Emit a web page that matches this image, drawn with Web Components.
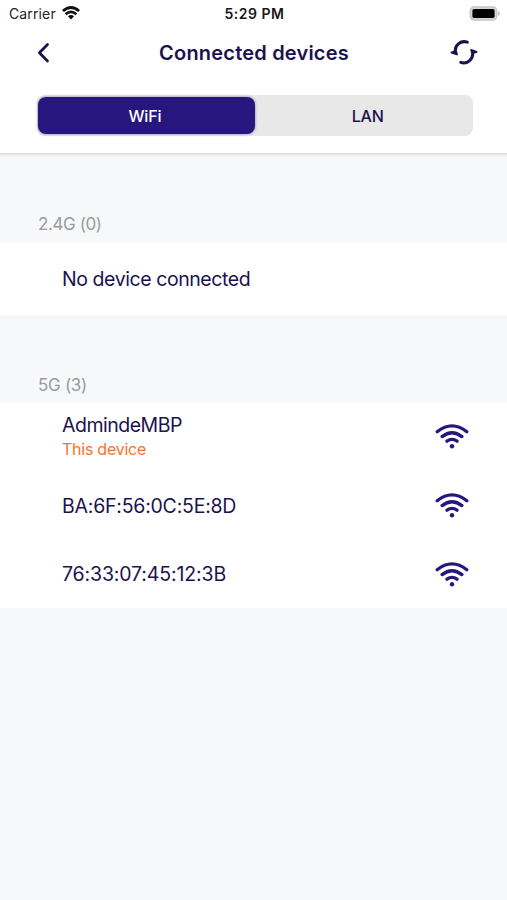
<!DOCTYPE html>
<html lang="en">
<head>
<meta charset="utf-8">
<title>Connected devices</title>
<style>
html,body{margin:0;height:100%;background:#f6f8fa}
body{font-family:Inter,"Liberation Sans",sans-serif;color:#1c1250;overflow:hidden}
</style>
</head>
<body>
<app-screen></app-screen>
<script>
const define = (name, html) => {
  const t = document.createElement('template');
  t.innerHTML = html;
  customElements.define(name, class extends HTMLElement {
    constructor() {
      super();
      this.attachShadow({mode: 'open'}).appendChild(t.content.cloneNode(true));
    }
  });
};

define('wifi-icon', `
<style>:host{display:block;width:34px;height:26px}svg{display:block;width:100%;height:100%}</style>
<svg viewBox="0 0 34 26" fill="none" stroke="#28167f" stroke-width="3.3" stroke-linecap="round">
<path d="M2.2 8.7Q17-3 31.8 8.7M7.1 13.6Q17 5.8 26.9 13.6M12 18.2Q17 14.6 22 18.2"/>
<circle cx="17" cy="23.2" r="2.2" fill="#28167f" stroke="none"/></svg>`);

define('status-bar', `
<style>
:host{display:grid;grid-template-columns:1fr auto 1fr;align-items:center;height:27px;padding:0 7px 0 9px;color:#222}
.left{display:flex;align-items:center;gap:6px;font-size:14px;letter-spacing:.13px}
.time{font-size:14px;font-weight:600;letter-spacing:.5px;color:#181818}
.battery{justify-self:end}
svg{display:block}
</style>
<div class="left"><span>Carrier</span>
<svg width="18" height="15" viewBox="0 0 18 15" fill="none" stroke="#111" stroke-width="2.8">
<path d="M.9 5Q9-2 17.1 5M3.6 8.2Q9 3.6 14.4 8.2"/><path d="M5.9 10.3Q9 7.6 12.1 10.3L9 13.6Z" fill="#111" stroke="none"/></svg></div>
<span class="time">5:29 PM</span>
<svg class="battery" width="31" height="15" viewBox="0 0 31 15">
<rect x="1.3" y=".9" width="26.4" height="13.2" rx="4" fill="#d6d6d6" stroke="#c2c2c2" stroke-width="1.3"/>
<rect x="3.4" y="3.1" width="22.2" height="8.8" rx="1.6" fill="#000"/>
<path d="M29 5.1Q31 6 31 7.5T29 9.9Z" fill="#c2c2c2"/></svg>`);

define('nav-bar', `
<style>
:host{display:grid;grid-template-columns:1fr auto 1fr;align-items:center;height:51px;padding:0 28px 0 36px}
h1{margin:0;font-size:20px;line-height:24px;font-weight:600;letter-spacing:.2px;color:#1c1250;padding-right:7px}
.refresh{justify-self:end}
svg{display:block}
</style>
<svg width="15" height="22" viewBox="0 0 15 22" fill="none" stroke="#1c1250" stroke-width="2.8" stroke-linecap="round" stroke-linejoin="round"><path d="M11.5 2.6 3.4 10.7 11.5 19"/></svg>
<h1><slot></slot></h1>
<svg class="refresh" width="30" height="28" viewBox="0 0 30 28" fill="none" stroke="#1c1250" stroke-width="3" stroke-linecap="round">
<path d="M18.3 3.2C12 1 5.4 6 6.2 13.4M11.8 23.4C18 25.6 24.4 20.4 23.8 13"/>
<path d="M2.6 13.6 7.9 15.4 7 12.6ZM27.5 12.9 22.2 11 23.1 13.8Z" fill="#1c1250" stroke-width="2" stroke-linejoin="round"/></svg>`);

define('segment-tab', `
<style>
:host{display:flex;align-items:center;justify-content:center;box-sizing:border-box;border-radius:8px;font-size:16px;font-weight:500;letter-spacing:-.2px;color:#1c1250;padding-left:9px}
:host([selected]){background:#28167f;color:#fff;box-shadow:0 0 3px #28167f88;padding:0 3px 0 0}
</style><slot></slot>`);

define('segment-control', `
<style>:host{display:grid;grid-template-columns:1fr 1fr;box-sizing:border-box;height:41px;margin:17px 34.5px 0 37px;padding:2px 1px;border-radius:8px;background:#e8e8e8}</style><slot></slot>`);

define('screen-header', `
<style>:host{display:block;box-sizing:border-box;height:153px;background:#fff;box-shadow:0 1px 2px 1px #d9dadc}</style><slot></slot>`);

define('device-section', `
<style>
:host{display:block}
.label{display:flex;align-items:flex-end;box-sizing:border-box;height:87px;padding:0 38px 7px;font-size:17px;line-height:21px;letter-spacing:-.4px;color:#9b9b9e}
.card{background:#fff}
:host(.lower) .label{padding-bottom:6px;letter-spacing:-.3px}
</style><div class="label"><slot name="label"></slot></div><div class="card"><slot></slot></div>`);

define('device-row', `
<style>
:host{display:flex;align-items:center;justify-content:space-between;box-sizing:border-box;height:var(--row-height,68.67px);padding:0 38px 0 62px}
.text{display:flex;flex-direction:column;font-size:19.5px;line-height:24px;letter-spacing:var(--tracking,0);padding-top:var(--nudge,0)}
::slotted([slot=note]){font-size:16px;line-height:20px;margin-top:2px;letter-spacing:-.25px;color:#f6742a}
</style><div class="text"><span><slot></slot></span><slot name="note"></slot></div><slot name="icon"></slot>`);

define('app-screen', `
<style>
:host{display:block;height:900px;background:#f6f8fa}
main{padding-top:2px}
</style>
<screen-header>
<status-bar></status-bar>
<nav-bar>Connected devices</nav-bar>
<segment-control><segment-tab selected>WiFi</segment-tab><segment-tab>LAN</segment-tab></segment-control>
</screen-header>
<main>
<device-section><span slot="label">2.4G (0)</span>
<device-row style="--row-height:73px;--tracking:-.43px">No device connected</device-row></device-section>
<device-section class="lower"><span slot="label">5G (3)</span>
<device-row style="--tracking:-.5px">AdmindeMBP<span slot="note">This device</span><wifi-icon slot="icon"></wifi-icon></device-row>
<device-row style="--tracking:-.23px;--nudge:2px">BA:6F:56:0C:5E:8D<wifi-icon slot="icon"></wifi-icon></device-row>
<device-row style="--tracking:-.14px">76:33:07:45:12:3B<wifi-icon slot="icon"></wifi-icon></device-row>
</device-section>
</main>`);
</script>
</body>
</html>
